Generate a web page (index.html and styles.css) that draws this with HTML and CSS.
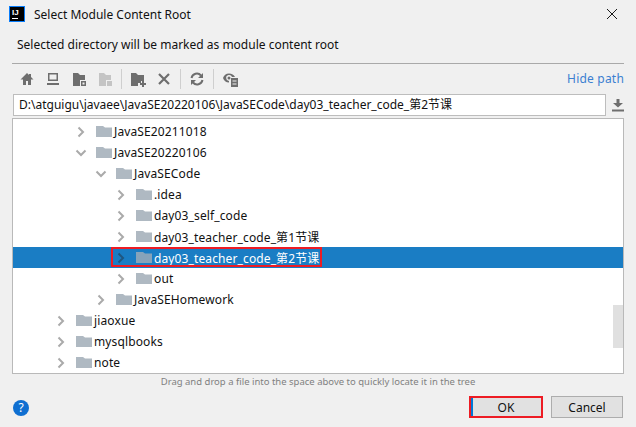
FILE: index.html
```html
<!DOCTYPE html>
<html lang="en">
<head>
    <meta charset="UTF-8">
    <meta name="viewport" content="width=device-width, initial-scale=1.0">
    <title>Select Module Content Root</title>
    <link rel="stylesheet" href="styles.css">
</head>
<body>
    <svg width="0" height="0" class="defs">
        <symbol id="folder" viewBox="0 0 16 11"><path d="M0 0h7l2 1.500h7V11H0z"/></symbol>
        <symbol id="chev" viewBox="0 0 10 12"><path d="M2.500 1.500 7 6l-4.500 4.500" fill="none" stroke="currentColor" stroke-width="2"/></symbol>
        <symbol id="chevdown" viewBox="0 0 12 10"><path d="M1.500 2.500 6 7l4.500-4.500" fill="none" stroke="currentColor" stroke-width="2"/></symbol>
    </svg>

    <div class="titlebar">
        <svg class="app-icon" width="16" height="16" viewBox="0 0 16 16">
            <rect x="0" y="0" width="16" height="16" fill="#087cfa"/>
            <rect x="1" y="1" width="14" height="14" fill="#000"/>
            <rect x="3" y="12" width="6" height="1" fill="#fff"/>
            <text x="3" y="9" class="app-icon-text">IJ</text>
        </svg>
        <span class="title">Select Module Content Root</span>
        <svg class="close" width="10" height="10" viewBox="0 0 10 10"><path d="M0 0l10 10M10 0L0 10" stroke="#1a1a1a" stroke-width="1"/></svg>
    </div>

    <p class="message">Selected directory will be marked as module content root</p>

    <div class="toolbar">
        <div class="tools">
            <svg class="tool" width="16" height="16" viewBox="0 0 16 16"><path d="M8 2 1.500 8.500H4V14h3v-4h2v4h3V8.500h2.500L12 6V3h-2v1z" fill="#6e6e6e"/></svg>
            <svg class="tool" width="16" height="16" viewBox="0 0 16 16"><path d="M3 2h10v8H3zM4.500 3.500v5h7v-5zM2 12h12v2H2z" fill="#6e6e6e" fill-rule="evenodd"/></svg>
            <svg class="tool" width="16" height="16" viewBox="0 0 16 16"><path d="M2 2h5l2 2h5v5H9v6H2z" fill="#6e6e6e"/><path d="M10 10h5v5h-5zM11.500 11.500v2h2v-2z" fill="#6e6e6e" fill-rule="evenodd"/></svg>
            <svg class="tool" width="16" height="16" viewBox="0 0 16 16"><path d="M2 2h5l2 2h5v5H9v6H2z" fill="#c4c4c4"/><path d="M10 10h5v5h-5z" fill="#c4c4c4"/></svg>
            <span class="sep"></span>
            <svg class="tool" width="16" height="16" viewBox="0 0 16 16"><path d="M1 2h5l2 2h6v6h-3v2H8v3H1z" fill="#6e6e6e"/><path d="M12 10h2v2h2v2h-2v2h-2v-2h-2v-2h2z" fill="#6e6e6e"/></svg>
            <svg class="tool" width="16" height="16" viewBox="0 0 16 16"><path d="M3 3l10 10M13 3L3 13" stroke="#6e6e6e" stroke-width="2.200"/></svg>
            <span class="sep"></span>
            <svg class="tool" width="16" height="16" viewBox="0 0 16 16"><path d="M2.500 7A5.500 5.500 0 0 1 12 4.500M13.500 9A5.500 5.500 0 0 1 4 11.500" fill="none" stroke="#6e6e6e" stroke-width="2"/><path d="M14 2v5H9zM2 14V9h5z" fill="#6e6e6e"/></svg>
            <span class="sep"></span>
            <svg class="tool" width="16" height="16" viewBox="0 0 16 16"><path d="M7 2.500c-3 0-5.200 2-6 4.500.8 2.500 3 4.500 6 4.500V10a3 3 0 1 1 3-4h3c-1-2-3.300-3.500-6-3.500z" fill="#6e6e6e"/><circle cx="7" cy="7" r="1.500" fill="#6e6e6e"/><path d="M9 7h7v9H9zM10.500 9.500v1h4v-1zM10.500 12.500v1h4v-1z" fill="#6e6e6e" fill-rule="evenodd"/></svg>
        </div>
        <span class="hide-path">Hide path</span>
    </div>

    <div class="path-row">
        <div class="path-input">D:\atguigu\javaee\JavaSE20220106\JavaSECode\day03_teacher_code_第2节课</div>
        <svg class="path-icon" width="12" height="14" viewBox="0 0 12 14"><path d="M4.500 1h3v4H11L6 9.500 1 5h3.500zM0 11.500h12v2H0z" fill="#6e6e6e"/></svg>
    </div>

    <div class="tree">
        <div class="row lvl1"><svg class="chev"><use href="#chev"/></svg><svg class="folder"><use href="#folder"/></svg><span>JavaSE20211018</span></div>
        <div class="row lvl1"><svg class="chev down"><use href="#chevdown"/></svg><svg class="folder"><use href="#folder"/></svg><span>JavaSE20220106</span></div>
        <div class="row lvl2"><svg class="chev down"><use href="#chevdown"/></svg><svg class="folder"><use href="#folder"/></svg><span>JavaSECode</span></div>
        <div class="row lvl3"><svg class="chev"><use href="#chev"/></svg><svg class="folder"><use href="#folder"/></svg><span>.idea</span></div>
        <div class="row lvl3"><svg class="chev"><use href="#chev"/></svg><svg class="folder"><use href="#folder"/></svg><span>day03_self_code</span></div>
        <div class="row lvl3"><svg class="chev"><use href="#chev"/></svg><svg class="folder"><use href="#folder"/></svg><span>day03_teacher_code_第1节课</span></div>
        <div class="row lvl3 selected"><svg class="chev"><use href="#chev"/></svg><svg class="folder"><use href="#folder"/></svg><span>day03_teacher_code_第2节课</span><i class="mark"></i></div>
        <div class="row lvl3"><svg class="chev"><use href="#chev"/></svg><svg class="folder"><use href="#folder"/></svg><span>out</span></div>
        <div class="row lvl2"><svg class="chev"><use href="#chev"/></svg><svg class="folder"><use href="#folder"/></svg><span>JavaSEHomework</span></div>
        <div class="row lvl0"><svg class="chev"><use href="#chev"/></svg><svg class="folder"><use href="#folder"/></svg><span>jiaoxue</span></div>
        <div class="row lvl0"><svg class="chev"><use href="#chev"/></svg><svg class="folder"><use href="#folder"/></svg><span>mysqlbooks</span></div>
        <div class="row lvl0"><svg class="chev"><use href="#chev"/></svg><svg class="folder"><use href="#folder"/></svg><span>note</span></div>
        <div class="scrollbar"></div>
    </div>

    <p class="hint">Drag and drop a file into the space above to quickly locate it in the tree</p>

    <div class="footer">
        <span class="help">?</span>
        <div class="buttons">
            <button class="btn btn-ok">OK</button>
            <button class="btn btn-cancel">Cancel</button>
        </div>
    </div>
</body>
</html>
```

FILE: styles.css
```css
* {
    box-sizing: border-box;
}

html, body {
    margin: 0;
    height: 427px;
    overflow: hidden;
}

body {
    background: #f0f0f0;
    color: #111;
    font-family: "Noto Sans", "Noto Sans CJK SC", sans-serif;
    font-size: 12px;
}

.defs {
    position: absolute;
}

.titlebar {
    height: 30px;
    display: flex;
    align-items: center;
    padding: 0 19px 2px 9px;
}

.app-icon {
    margin-right: 9px;
}

.app-icon-text {
    fill: #fff;
    font-size: 8px;
    font-weight: 700;
    font-family: "Liberation Sans", sans-serif;
}

.title {
    flex: 1;
}

.message {
    margin: 0;
    height: 33px;
    padding: 7px 0 0 17px;
    line-height: 16px;
}

.toolbar {
    margin: 0 12px;
    height: 30px;
    border-top: 1px solid #a9a9a9;
    display: flex;
    align-items: center;
    justify-content: space-between;
}

.tools {
    display: flex;
    align-items: center;
    padding-left: 7px;
}

.tool {
    margin-right: 10px;
}

.sep {
    width: 1px;
    height: 20px;
    background: #cfcfcf;
    margin: 0 8px 0 -2px;
}

.hide-path {
    color: #3b7fd1;
    letter-spacing: 0.2px;
}

.path-row {
    margin: 0 12px 0 13px;
    height: 23px;
    display: flex;
    align-items: center;
    gap: 3px;
}

.path-input {
    flex: 1;
    height: 22px;
    padding-left: 5px;
    background: #fff;
    border: 1px solid #bdbdbd;
    line-height: 20px;
}

.path-icon {
    margin: 0 0 0 3px;
}

.tree {
    position: relative;
    margin: 2px 12px 0;
    height: 256px;
    background: #fff;
    border: 1px solid #b9b9b9;
    padding-top: 2px;
    overflow: hidden;
    letter-spacing: 0.12px;
}

.row {
    position: relative;
    height: 21px;
    display: flex;
    align-items: center;
}

.lvl0 { padding-left: 43px; }
.lvl1 { padding-left: 63px; }
.lvl2 { padding-left: 83px; }
.lvl3 { padding-left: 103px; }

.chev {
    width: 10px;
    height: 12px;
    margin-right: 10px;
    color: #aaaaaa;
    flex: none;
}

.chev.down {
    width: 12px;
    height: 10px;
    margin-left: -1px;
    margin-right: 9px;
}

.folder {
    width: 16px;
    height: 11px;
    margin-right: 2px;
    fill: #afb9c2;
    flex: none;
}

.selected {
    background: #1a7dc4;
    color: #fff;
}

.selected .chev {
    color: #1f5680;
}

.selected .folder {
    fill: #86a3ba;
}

.mark {
    position: absolute;
    left: 98px;
    top: 0;
    width: 211px;
    height: 20px;
    border: 2px solid #ed1c24;
}

.scrollbar {
    position: absolute;
    right: 0;
    top: 186px;
    width: 10px;
    height: 43px;
    background: #e0e0e0;
}

.hint {
    margin: 0;
    height: 15px;
    text-align: center;
    color: #808080;
    font-size: 9.500px;
    line-height: 15px;
}

.footer {
    margin: 7px 13px 0;
    display: flex;
    align-items: center;
    justify-content: space-between;
}

.help {
    width: 16px;
    height: 16px;
    margin-top: 2px;
    border-radius: 50%;
    background: #0f6fd1;
    color: #fff;
    text-align: center;
    line-height: 16px;
    font-size: 12px;
}

.buttons {
    display: flex;
    gap: 8px;
}

.btn {
    height: 22px;
    background: #e1e1e1;
    border: 1px solid #adadad;
    color: #111;
    font: inherit;
    padding: 0;
}

.btn-ok {
    width: 74px;
    border: 2px solid #ed1c24;
    box-shadow: inset 2px 0 0 #0078d7;
}

.btn-cancel {
    width: 72px;
}
```
